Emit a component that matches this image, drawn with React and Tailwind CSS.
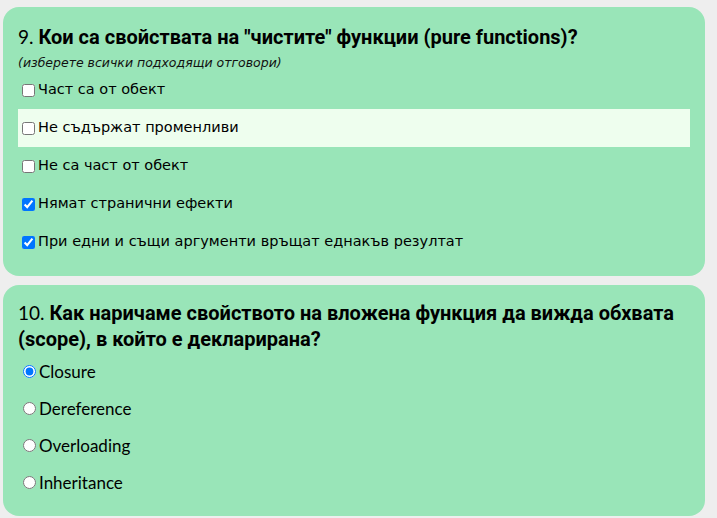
import React from 'react';

const CYR = '"DejaVu Sans", "Noto Sans", sans-serif';
const LAT = 'Lato, "Open Sans", sans-serif';
const HEAD = 'Roboto, "Noto Sans", sans-serif';

const q1 = [
    { label: 'Част са от обект', checked: false },
    { label: 'Не съдържат променливи', checked: false, hover: true },
    { label: 'Не са част от обект', checked: false },
    { label: 'Нямат странични ефекти', checked: true },
    { label: 'При едни и същи аргументи връщат еднакъв резултат', checked: true },
];

const q2 = ['Closure', 'Dereference', 'Overloading', 'Inheritance'];

export default function App() {
    return (
        <div className="min-h-screen bg-[#eeeeee] pt-[7px] pl-[3px] pr-[12px] text-black" style={{ fontFamily: LAT }}>
            <div className="rounded-[16px] bg-[#99e5b8] pl-[15px] pr-[15px] pt-[17px] pb-[15px]">
                <div className="text-[19px] leading-[26px]">
                    <span>9. </span>
                    <span className="text-[20px] font-bold" style={{ fontFamily: HEAD }}>
                        Кои са свойствата на "чистите" функции (pure functions)?
                    </span>
                </div>
                <div className="mt-[5px] text-[12.5px] italic leading-[16px] text-[#111]" style={{ fontFamily: CYR }}>
                    (изберете всички подходящи отговори)
                </div>
                <div className="flex flex-col">
                    {q1.map((o) => (
                        <label
                            key={o.label}
                            className={`flex h-[38px] items-center text-[14.5px] ${o.hover ? 'bg-[#eefeee]' : ''}`}
                            style={{ fontFamily: CYR }}
                        >
                            <input type="checkbox" defaultChecked={o.checked} className="ml-[4px] mr-[3px]" />
                            <span>{o.label}</span>
                        </label>
                    ))}
                </div>
            </div>

            <div className="mt-[9px] rounded-[16px] bg-[#99e5b8] pl-[15px] pr-[15px] pt-[15px] pb-[15px]">
                <div className="text-[19px] leading-[26px]">
                    <span>10. </span>
                    <span className="text-[20px] font-bold" style={{ fontFamily: HEAD }}>
                        Как наричаме свойството на вложена функция да вижда обхвата (scope), в който е декларирана?
                    </span>
                </div>
                <div className="mt-[1px] flex flex-col">
                    {q2.map((o, i) => (
                        <label key={o} className="flex h-[37px] items-center text-[17px]">
                            <input type="radio" name="q10" defaultChecked={i === 0} className="ml-[5px] mr-[3px]" />
                            <span>{o}</span>
                        </label>
                    ))}
                </div>
            </div>
        </div>
    );
}
